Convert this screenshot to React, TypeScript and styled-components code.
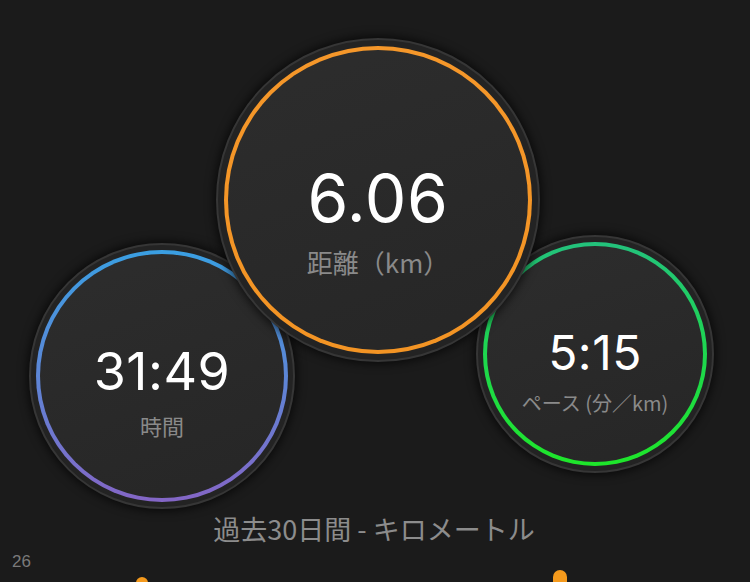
import React from 'react'
import styled, { createGlobalStyle } from 'styled-components'

const GlobalStyle = createGlobalStyle`
  html, body {
    margin: 0;
    padding: 0;
    background: #1b1b1b;
  }
  body {
    font-family: Inter, 'Noto Sans CJK JP', sans-serif;
  }
`

const Screen = styled.div`
  width: 750px;
  height: 582px;
  overflow: hidden;
  background: #1b1b1b;
  display: flex;
  flex-direction: column;
`

const Stage = styled.div`
  position: relative;
  height: 510px;
  flex-shrink: 0;
`

const Bubble = styled.div<{ $x: number; $y: number; $size: number; $z: number; $gap: number }>`
  position: absolute;
  left: ${(p) => p.$x}px;
  top: ${(p) => p.$y}px;
  width: ${(p) => p.$size}px;
  height: ${(p) => p.$size}px;
  z-index: ${(p) => p.$z};
  box-sizing: border-box;
  border-radius: 50%;
  padding: ${(p) => p.$gap}px;
  background: #232323;
  border: 2px solid #363636;
  box-shadow: 0 0 10px 2px rgba(0, 0, 0, 0.65);
`

const Ring = styled.div<{ $grad: string; $pad: number }>`
  width: 100%;
  height: 100%;
  box-sizing: border-box;
  border-radius: 50%;
  border: 4px solid transparent;
  background: linear-gradient(160deg, #2d2d2d, #262626) padding-box, ${(p) => p.$grad} border-box;
  display: flex;
  flex-direction: column;
  align-items: center;
  justify-content: center;
  padding-top: ${(p) => p.$pad}px;
`

const Value = styled.div<{ $fs: number }>`
  font-family: Inter, 'Liberation Sans', sans-serif;
  font-size: ${(p) => p.$fs}px;
  line-height: 1;
  color: #ffffff;
  font-weight: 400;
  letter-spacing: 0.01em;
`

const Label = styled.div<{ $fs: number; $mt: number }>`
  font-family: 'Noto Sans CJK JP', sans-serif;
  font-size: ${(p) => p.$fs}px;
  line-height: 1.2;
  margin-top: ${(p) => p.$mt}px;
  color: #8a8a8a;
  white-space: nowrap;
`

const Caption = styled.div`
  font-family: 'Noto Sans CJK JP', sans-serif;
  font-size: 27px;
  line-height: 38px;
  color: #8c8c8c;
  text-align: center;
  padding-right: 2px;
`

const Chart = styled.div`
  display: flex;
  flex-direction: column;
`

const AxisLabel = styled.div`
  font-family: 'Liberation Sans', sans-serif;
  font-size: 17px;
  line-height: 20px;
  color: #7a7a7a;
  padding: 4px 0 0 12px;
`

const Bars = styled.svg`
  display: block;
  margin-top: -2px;
`

const stats = [
  {
    key: 'time', x: 29, y: 243, size: 266, z: 1, gap: 5, pad: 33,
    grad: 'linear-gradient(180deg, #3a9fe2 0%, #5d86d6 50%, #8466c6 100%)',
    value: '31:49', fs: 52, label: '時間', lfs: 22, mt: 14,
  },
  {
    key: 'pace', x: 476, y: 235, size: 238, z: 1, gap: 5, pad: 35,
    grad: 'linear-gradient(180deg, #23c27c 0%, #1ed74f 50%, #1ee62a 100%)',
    value: '5:15', fs: 48, label: 'ペース (分／km)', lfs: 20, mt: 14,
  },
  {
    key: 'dist', x: 216, y: 38, size: 324, z: 2, gap: 6, pad: 42,
    grad: 'linear-gradient(180deg, #f5972a, #f39424)',
    value: '6.06', fs: 66, label: '距離（km）', lfs: 26, mt: 15,
  },
]

export default function App() {
  return (
    <Screen>
      <GlobalStyle />
      <Stage>
        {stats.map((s) => (
          <Bubble key={s.key} $x={s.x} $y={s.y} $size={s.size} $z={s.z} $gap={s.gap}>
            <Ring $grad={s.grad} $pad={s.pad}>
              <Value $fs={s.fs}>{s.value}</Value>
              <Label $fs={s.lfs} $mt={s.mt}>{s.label}</Label>
            </Ring>
          </Bubble>
        ))}
      </Stage>
      <Caption>過去30日間 - キロメートル</Caption>
      <Chart>
        <AxisLabel>26</AxisLabel>
        <Bars width="750" height="20" viewBox="0 0 750 20">
          <rect x="136" y="7" width="12" height="20" rx="6" fill="#f59a1c" />
          <rect x="553" y="0" width="14" height="24" rx="7" fill="#f59a1c" />
        </Bars>
      </Chart>
    </Screen>
  )
}
